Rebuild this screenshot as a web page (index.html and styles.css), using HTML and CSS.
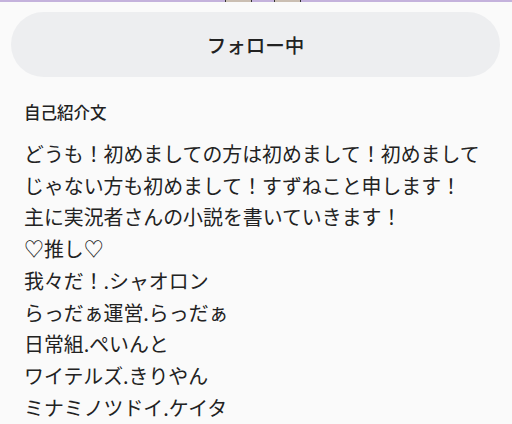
FILE: index.html
```html
<!DOCTYPE html>
<html lang="ja">
<head>
    <meta charset="UTF-8">
    <meta name="viewport" content="width=device-width, initial-scale=1.0">
    <title>プロフィール</title>
    <link rel="stylesheet" href="styles.css">
</head>
<body>
    <!-- Header image edge -->
    <div class="cover-edge">
        <span class="cover-bit"></span>
        <span class="cover-bit"></span>
    </div>

    <!-- Follow button -->
    <div class="follow-wrap">
        <button class="follow-button">フォロー中</button>
    </div>

    <!-- Profile text -->
    <div class="profile">
        <h2>自己紹介文</h2>
        <p class="bio">どうも！初めましての方は初めまして！初めまして<br>じゃない方も初めまして！すずねこと申します！<br>主に実況者さんの小説を書いていきます！<br>♡推し♡<br>我々だ！.シャオロン<br>らっだぁ運営.らっだぁ<br>日常組.ぺいんと<br>ワイテルズ.きりやん<br>ミナミノツドイ.ケイタ</p>
    </div>
</body>
</html>
```

FILE: styles.css
```css
/* Global Styles */
body {
    margin: 0;
    background-color: #fafafa;
    color: #222222;
    font-family: 'Noto Sans CJK JP', 'Noto Sans', sans-serif;
    overflow: hidden;
}

/* Header image edge */
.cover-edge {
    height: 2px;
    background-color: #c4b2dc;
    display: flex;
    gap: 22px;
    padding-left: 225px;
}

.cover-bit {
    width: 25px;
    height: 2px;
    background-color: #cbbfb3;
    border-left: 1px solid #333333;
    border-right: 1px solid #333333;
}

/* Follow button */
.follow-wrap {
    padding: 10px 12px 0 11px;
}

.follow-button {
    width: 100%;
    height: 65px;
    border: none;
    border-radius: 33px;
    background-color: #edeef0;
    color: #222222;
    font-family: inherit;
    font-size: 19.5px;
    font-weight: 500;
    padding: 0;
}

/* Profile */
.profile {
    padding: 0 24px;
}

.profile h2 {
    margin: 22px 0 0;
    font-size: 16.5px;
    font-weight: 500;
    line-height: 26px;
}

.bio {
    margin: 13px 0 0;
    font-size: 19.9px;
    line-height: 31.7px;
    white-space: nowrap;
}
```
